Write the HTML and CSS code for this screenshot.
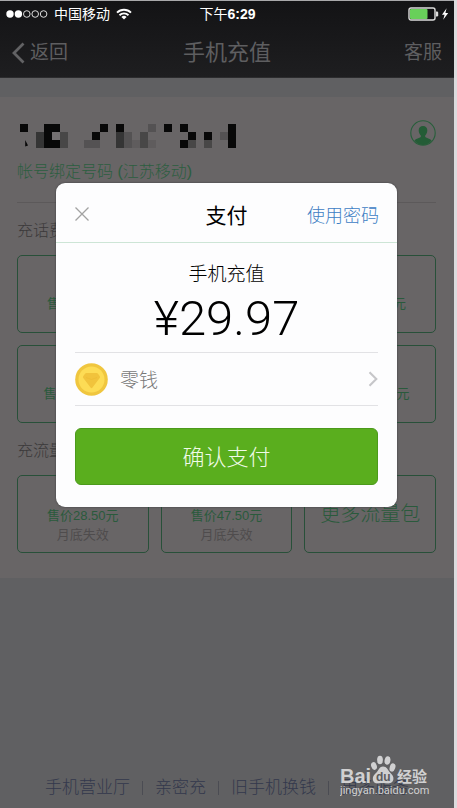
FILE: index.html
```html
<!DOCTYPE html>
<html lang="zh-CN">
<head>
<meta charset="utf-8">
<meta name="viewport" content="width=device-width, initial-scale=1">
<title>手机充值</title>
<link rel="stylesheet" href="styles.css">
</head>
<body>
<div class="app">
  <header class="top">
    <div class="status">
      <div class="carrier">
        <svg width="42" height="10" viewBox="0 0 42 10" aria-hidden="true">
          <g fill="#fff"><circle cx="4" cy="5" r="3.7"/><circle cx="12.4" cy="5" r="3.7"/></g>
          <g fill="none" stroke="#ddd" stroke-width="1"><circle cx="20.8" cy="5" r="3.3"/><circle cx="29.2" cy="5" r="3.3"/><circle cx="37.6" cy="5" r="3.3"/></g>
        </svg>
        <span>中国移动</span>
        <svg width="16" height="12" viewBox="0 0 16 12" aria-hidden="true">
          <g fill="none" stroke="#fff" stroke-width="1.9"><path d="M1 4.6a10 10 0 0 1 14 0"/><path d="M3.5 7.2a6.4 6.4 0 0 1 9 0"/></g>
          <path fill="#fff" d="M8 11.6 5.4 9a3.7 3.7 0 0 1 5.2 0z"/>
        </svg>
      </div>
      <time class="clock">下午<b>6:29</b></time>
      <div class="battery">
        <svg width="41" height="14" viewBox="0 0 41 14" aria-hidden="true">
          <rect x="1" y="1" width="26" height="12" rx="2" fill="#101012" stroke="#ddd" stroke-width="1.4"/>
          <rect x="2" y="2" width="17.5" height="10" rx="1" fill="#68d05a"/>
          <path fill="#ddd" d="M28 4.5h1q1.2 0 1.2 1.2v2.6q0 1.2-1.2 1.2h-1z"/>
          <path fill="#fff" d="M38.6 1.2 34 7.8h2.6l-1.4 5L40.2 6h-2.8z"/>
        </svg>
      </div>
    </div>
    <nav class="nav">
      <a class="back" href="#">
        <svg width="13" height="22" viewBox="0 0 13 22" aria-hidden="true"><path d="M11.5 1.5 2 11l9.500 9.500" fill="none" stroke="#626264" stroke-width="2.800"/></svg>
        <span>返回</span>
      </a>
      <h1 class="title">手机充值</h1>
      <a class="service" href="#">客服</a>
    </nav>
  </header>

  <main class="card">
    <div class="account">
      <div>
        <svg class="mosaic" width="216" height="24" viewBox="0 0 27 3" shape-rendering="crispEdges" role="img" aria-label="号码">
          <path fill="#080808" d="M0 0h1v1h-1zM3 0h2v1h-1v1h1v1h-2zM10 0h1v1h-1zM9 1h1v1h-1zM12 0h1v1h-1zM18 0h1v1h-1zM20 0h1v1h-1zM21 1h1v1h-1zM20 2h1v1h-1zM23 1h1v1h-1zM26 0h1v3h-1z"/>
          <path fill="#353535" d="M2 1h1v2h-1zM12 1h1v2h-1z"/>
          <path fill="#484747" d="M5 1h1v2h-1zM15 1h1v2h-1zM21 2h1v1h-1zM23 2h1v1h-1z"/>
          <path fill="#545253" d="M13 1h1v2h-1zM16 0h1v1h-1zM8 2h2v1h-2zM25 1h1v1h-1z"/>
          <path fill="#5f5c5d" d="M14 2h1v1h-1zM16 2h1v1h-1z"/>
          <path fill="#737071" d="M4 1h1v1h-1z"/>
          <path fill="#080808" shape-rendering="auto" d="M.65 2 1 2.700.65 2.800z"/>
        </svg>
        <p class="bound">帐号绑定号码 (江苏移动)</p>
      </div>
      <svg width="26" height="26" viewBox="0 0 26 26" role="img" aria-label="联系人">
        <circle cx="13" cy="13" r="12.200" fill="none" stroke="#285f3b" stroke-width="1.100"/>
        <path fill="#245c36" d="M13 6c2.700 0 4.300 1.700 4.300 4.300 0 2.400-.9 4-2.100 5.200v1.600c1.400 1.100 4.900 1.700 6.400 3.400A11.400 11.400 0 0 1 13 25a11.400 11.400 0 0 1-8.600-4.500c1.500-1.700 5-2.300 6.400-3.400v-1.600c-1.200-1.200-2.100-2.800-2.100-5.200C8.700 7.700 10.300 6 13 6z"/>
      </svg>
    </div>

    <h2 class="group">充话费</h2>
    <div class="tiles">
      <button class="tile">售价10.00元</button>
      <button class="tile" aria-label="20元"></button>
      <button class="tile">售价29.97元</button>
      <button class="tile">售价100.00元</button>
      <button class="tile" aria-label="200元"></button>
      <button class="tile">售价300.00元</button>
    </div>

    <h2 class="group">充流量</h2>
    <div class="tiles data">
      <button class="tile">售价28.50元<small>月底失效</small></button>
      <button class="tile">售价47.50元<small>月底失效</small></button>
      <button class="tile more">更多流量包</button>
    </div>
  </main>

  <footer class="links">
    <a href="#">手机营业厅</a><i></i><a href="#">亲密充</a><i></i><a href="#">旧手机换钱</a><i></i><a href="#">更多服务</a>
  </footer>

  <div class="overlay">
    <section class="dialog" role="dialog" aria-label="支付">
      <header class="dialog-head">
        <button class="close" aria-label="关闭"><svg width="16" height="16" viewBox="0 0 16 16" aria-hidden="true"><path d="M1.500 1.500l13 13M14.500 1.500l-13 13" stroke="#a2a2a2" stroke-width="1.300"/></svg></button>
        <h2>支付</h2>
        <a href="#">使用密码</a>
      </header>
      <div class="dialog-body">
        <p class="item">手机充值</p>
        <p class="amount">¥29.97</p>
        <button class="method">
          <svg width="33" height="33" viewBox="0 0 33 33" aria-hidden="true">
            <circle cx="16.500" cy="16.500" r="16.300" fill="#f0c63f"/>
            <circle cx="16.500" cy="16.500" r="13" fill="#fddc55"/>
            <path fill="#f1c33c" d="M11.500 10h10q.8 0 1.300.6l2 2.700q.6.900-.1 1.700l-7.200 9.600q-1 1.200-2 0L8.300 15q-.7-.8-.1-1.700l2-2.700q.5-.6 1.300-.6z"/>
            <path fill="none" stroke="#ecb932" stroke-width=".6" d="M11 14.500l5.500 2 5.500-2"/>
          </svg>
          <span>零钱</span>
          <svg width="10" height="16" viewBox="0 0 10 16" aria-hidden="true"><path d="M1.500 1.200 8.300 8l-6.800 6.800" fill="none" stroke="#c6c6c9" stroke-width="2.100"/></svg>
        </button>
        <button class="confirm">确认支付</button>
      </div>
    </section>
  </div>

  <svg class="watermark" width="90" height="50" viewBox="0 0 90 50" role="img" aria-label="Baidu 经验">
    <g fill="#d0d0d1">
      <text class="wm-bai" x="0" y="29">Bai</text>
      <ellipse cx="34" cy="12" rx="2.800" ry="4" transform="rotate(-18 34 12)"/>
      <ellipse cx="40" cy="6" rx="2.900" ry="4.300"/>
      <ellipse cx="47.500" cy="6.500" rx="2.900" ry="4.300" transform="rotate(10 47.500 6.500)"/>
      <ellipse cx="52.500" cy="13.500" rx="2.800" ry="4.200" transform="rotate(18 52.500 13.500)"/>
      <path d="M43 12.500c4 0 4.700 3.600 7 6 2.400 2.300 3.800 4 3.400 6.800-.5 3.200-3 4.200-5.400 4.200-1.800 0-3.200-.5-5-.5s-3.200.5-5 .5c-3 0-5.100-1.400-5.200-4.500-.1-2.800 1.500-4.300 3.700-6.500 2.300-2.400 3-6 6.500-6z"/>
      <text class="wm-name" x="57" y="28">经验</text>
      <text class="wm-url" x="0" y="40">jingyan.baidu.com</text>
    </g>
    <text class="wm-du" x="36" y="27">du</text>
  </svg>
</div>
</body>
</html>
```
FILE: styles.css
```css
* { box-sizing: border-box; }

body {
  margin: 0;
  background: #dcdcde;
  font-family: "Liberation Sans", "Noto Sans CJK SC", sans-serif;
}

h1, h2, p { margin: 0; font-weight: 400; }
a { color: inherit; text-decoration: none; }
svg { display: block; flex: none; }

button {
  padding: 0;
  border: 0;
  background: none;
  color: inherit;
  font: inherit;
}

.app {
  position: relative;
  display: flex;
  flex-direction: column;
  min-height: 100vh;
  margin-right: 3px;
  border-top: 1px solid #a8a8aa;
  background: #606062;
}

/* Status bar and navigation */
.top {
  background: linear-gradient(#131315, #1e1e20);
  border-bottom: 1px solid #2c2c2e;
}

.status {
  display: grid;
  grid-template-columns: 1fr auto 1fr;
  align-items: center;
  height: 26px;
  padding: 0 5px 0 6px;
  color: #fff;
  font-size: 14px;
  line-height: 20px;
}

.carrier { display: flex; align-items: center; gap: 6px; }
.battery { justify-self: end; }

.nav {
  display: grid;
  grid-template-columns: 1fr auto 1fr;
  align-items: center;
  height: 50px;
  padding: 2px 12px 0;
  color: #5e5e60;
  font-size: 19px;
  line-height: 28px;
}

.back { display: flex; align-items: center; gap: 5px; }
.title { font-size: 22px; }
.service { justify-self: end; }

/* Recharge card */
.card {
  margin-top: 19px;
  padding: 23px 18px 25px 17px;
  background: #686566;
}

.account {
  display: flex;
  justify-content: space-between;
  padding-bottom: 18px;
  border-bottom: 1px solid #5c595a;
}

.mosaic { margin: 4px 0 12px 3px; }

.bound {
  color: #2c5e40;
  font-size: 16px;
  font-weight: 300;
  line-height: 24px;
}

.group {
  padding: 16px 0 12px;
  color: #3b393a;
  font-size: 16px;
  font-weight: 300;
  line-height: 24px;
}

.tiles {
  display: grid;
  grid-template-columns: repeat(3, 1fr);
  gap: 12px;
}

.tile {
  display: flex;
  flex-direction: column;
  align-items: center;
  height: 78px;
  padding-top: 38px;
  border: 1px solid #285039;
  border-radius: 5px;
  color: #2a5a3c;
  font-size: 13px;
  line-height: 20px;
}

.tile small { color: #4f4c4d; font-size: 13px; line-height: 18px; }
.data .tile { padding-top: 30px; }
.data .more { padding-top: 24px; font-size: 20px; font-weight: 300; line-height: 28px; }

/* Bottom links */
.links {
  display: flex;
  justify-content: center;
  align-items: center;
  gap: 12px;
  margin-top: auto;
  padding-bottom: 8px;
  color: #33384c;
  font-size: 17px;
  font-weight: 300;
  line-height: 24px;
}

.links i { width: 1px; height: 14px; background: #4b4c53; }

/* Payment dialog */
.overlay {
  position: absolute;
  inset: 0;
  padding: 182px 57px 0 56px;
}

.dialog {
  border-radius: 9px;
  background: #fdfdfe;
  box-shadow: 0 0 2px #38383a;
}

.dialog-head {
  display: grid;
  grid-template-columns: 1fr auto 1fr;
  align-items: center;
  height: 60px;
  padding: 2px 18px 0;
  border-bottom: 1px solid #cde5d6;
}

.dialog-head h2 { font-size: 21px; }
.dialog-head a { justify-self: end; color: #3d80c4; font-size: 18px; font-weight: 300; }
.close { justify-self: start; }

.dialog-body { padding: 18px 19px 22px; }
.item { font-size: 19px; font-weight: 300; line-height: 28px; text-align: center; }

.amount {
  margin-bottom: 3px;
  font-family: Roboto, "Liberation Sans", sans-serif;
  font-size: 49px;
  font-weight: 300;
  line-height: 60px;
  text-align: center;
}

.method {
  display: flex;
  align-items: center;
  width: 100%;
  height: 54px;
  border: solid #e2e2e5;
  border-width: 1px 0;
  color: #777;
  font-size: 19px;
  font-weight: 300;
}

.method span { flex: 1; padding: 0 0 2px 12px; text-align: left; }

.confirm {
  width: 100%;
  height: 57px;
  margin-top: 22px;
  padding-bottom: 3px;
  border: 1px solid #4c9a1c;
  border-radius: 6px;
  background: #5aae1e;
  color: #f0fbe8;
  font-size: 22px;
  font-weight: 300;
}

/* Watermark */
.watermark { position: absolute; right: 24px; bottom: 4px; }
.wm-bai { font: bold 20px "Liberation Sans", sans-serif; }
.wm-name { font: 700 15px "Noto Sans CJK SC", sans-serif; }
.wm-url { font: 400 11px Roboto, sans-serif; }
.wm-du { fill: #5c5c5e; font: bold 12px "Liberation Sans", sans-serif; }
```
